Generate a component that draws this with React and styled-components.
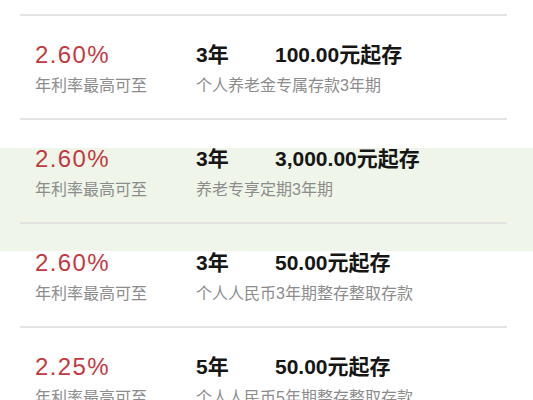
import React from "react";
import styled, { createGlobalStyle } from "styled-components";

const Global = createGlobalStyle`
  html, body {
    margin: 0;
    padding: 0;
    background: #ffffff;
    overflow: hidden;
    font-family: "Liberation Sans", "Noto Sans CJK SC", sans-serif;
  }
`;

const Page = styled.div`
  position: relative;
  width: 533px;
  height: 400px;
  overflow: hidden;
  background: #ffffff;
  padding-top: 14px;
  box-sizing: border-box;
`;

const List = styled.div`
  position: relative;
  z-index: 1;
  margin: 0 26px 0 20px;
  display: flex;
  flex-direction: column;
`;

const Row = styled.div`
  border-top: 2px solid #e3e3e3;
  padding: 26px 0 22px 15px;
  display: grid;
  grid-template-columns: 161px 79px 1fr;
  grid-template-rows: 26px 20px;
  row-gap: 8px;
  align-items: center;
`;

const Rate = styled.div`
  color: #c23a41;
  font-size: 24px;
  letter-spacing: 1.4px;
  line-height: 26px;
  white-space: nowrap;
`;

const Strong = styled.div`
  color: #161616;
  font-size: 21px;
  font-weight: 600;
  line-height: 26px;
  white-space: nowrap;
`;

const Sub = styled.div`
  color: #8c8c8c;
  font-size: 16px;
  line-height: 20px;
  white-space: nowrap;
  grid-column: ${(p) => (p.$wide ? "2 / 4" : "auto")};
`;

const Band = styled.div`
  position: absolute;
  z-index: 0;
  left: 0;
  right: 0;
  top: 148px;
  height: 103px;
  background: #eff6e9;
  pointer-events: none;
`;

const rows = [
  { rate: "2.60%", term: "3年", amount: "100.00元起存", desc: "个人养老金专属存款3年期" },
  { rate: "2.60%", term: "3年", amount: "3,000.00元起存", desc: "养老专享定期3年期" },
  { rate: "2.60%", term: "3年", amount: "50.00元起存", desc: "个人人民币3年期整存整取存款" },
  { rate: "2.25%", term: "5年", amount: "50.00元起存", desc: "个人人民币5年期整存整取存款" },
];

export default function App() {
  return (
    <Page>
      <Global />
      <Band />
      <List>
        {rows.map((r, i) => (
          <Row key={i}>
            <Rate>{r.rate}</Rate>
            <Strong>{r.term}</Strong>
            <Strong>{r.amount}</Strong>
            <Sub>年利率最高可至</Sub>
            <Sub $wide>{r.desc}</Sub>
          </Row>
        ))}
      </List>
    </Page>
  );
}
